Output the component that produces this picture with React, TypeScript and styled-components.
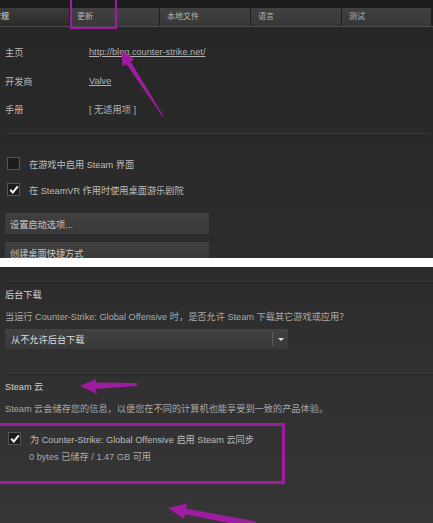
import React from "react";
import styled, { createGlobalStyle } from "styled-components";

const GlobalStyle = createGlobalStyle`
  html, body { margin: 0; padding: 0; background: #ffffff; }
  body {
    font-family: "Liberation Sans", "Noto Sans CJK SC", Arial, sans-serif;
    -webkit-font-smoothing: antialiased;
  }
`;

const MAGENTA = "#9d1ca0";

const Root = styled.div`
  position: relative;
  width: 433px;
  height: 523px;
  overflow: hidden;
  background: #ffffff;
  font-size: 9.2px;
`;

const TopPanel = styled.section`
  height: 258px;
  overflow: hidden;
  display: flex;
  flex-direction: column;
  background: linear-gradient(#262626, #2d2d2d);
`;

const TitleStrip = styled.div`
  height: 8px;
  flex: none;
  background: #1c1c1c;
`;

const TabBar = styled.nav`
  flex: none;
  height: 18px;
  display: flex;
  gap: 1px;
  background: #1f1f1f;
  border-bottom: 1px solid #4a4a4a;
`;

const Tab = styled.div<{ $w: number; $active?: boolean }>`
  width: ${(p) => p.$w}px;
  flex: none;
  overflow: hidden;
  white-space: nowrap;
  line-height: 18px;
  font-size: 8px;
  padding-left: ${(p) => (p.$active ? 0 : 7)}px;
  text-indent: ${(p) => (p.$active ? -7 : 0)}px;
  color: ${(p) => (p.$active ? "#e2e2e2" : "#b4b4b4")};
  background: ${(p) =>
    p.$active
      ? "linear-gradient(#3d3d3d, #2a2a2a)"
      : "linear-gradient(#414141, #383838)"};
`;

const TopBody = styled.div`
  padding: 0 5px;
  display: flex;
  flex-direction: column;
`;

const InfoGrid = styled.dl`
  margin: 18px 0 0;
  display: grid;
  grid-template-columns: 84px 1fr;
  grid-auto-rows: 14px;
  row-gap: 14.5px;
  align-items: center;
`;

const InfoLabel = styled.dt`
  margin: 0;
  color: #b9b9b9;
`;

const InfoValue = styled.dd<{ $link?: boolean }>`
  margin: 0;
  color: #b3b3b3;
  text-decoration: ${(p) => (p.$link ? "underline" : "none")};
  text-underline-offset: 1px;
`;

const Divider = styled.hr<{ $top: number; $inset?: boolean }>`
  margin: ${(p) => p.$top}px 0 0;
  border: 0;
  height: 1px;
  background: #3b3b3b;
  box-shadow: 0 1px 0 #222;
`;

const CheckRow = styled.label<{ $top: number; $indent: number }>`
  margin-top: ${(p) => p.$top}px;
  padding-left: ${(p) => p.$indent}px;
  display: flex;
  align-items: center;
  gap: 9px;
  height: 13px;
  color: #bdbdbd;
  white-space: nowrap;
`;

const Box = styled.span`
  width: 11px;
  height: 11px;
  flex: none;
  border: 1px solid #555;
  background: #1d1d1d;
  display: flex;
  align-items: center;
  justify-content: center;
`;

const ActionButton = styled.div<{ $top: number }>`
  margin-top: ${(p) => p.$top}px;
  width: 204px;
  height: 21px;
  flex: none;
  box-sizing: border-box;
  padding-left: 5px;
  display: flex;
  align-items: center;
  background: linear-gradient(#3f3f3f, #3a3a3a);
  color: #c6c6c6;
`;

const Gap = styled.div`
  height: 9px;
  background: #ffffff;
`;

const BottomPanel = styled.section`
  position: relative;
  height: 256px;
  padding: 14px 0 0 5px;
  box-sizing: border-box;
  display: flex;
  flex-direction: column;
  background: linear-gradient(#2c2c2c, #363636);
`;

const Heading = styled.div<{ $top: number }>`
  margin-top: ${(p) => p.$top}px;
  line-height: 12px;
  color: #d2d2d2;
`;

const Desc = styled.div<{ $top: number; $indent?: number }>`
  margin-top: ${(p) => p.$top}px;
  padding-left: ${(p) => p.$indent || 0}px;
  line-height: 12px;
  color: #a9a9a9;
  white-space: nowrap;
`;

const Select = styled.div`
  margin-top: 6px;
  width: 283px;
  height: 20px;
  display: flex;
  align-items: center;
  background: linear-gradient(#424242, #393939);
  color: #dcdcdc;
`;

const SelectText = styled.span`
  flex: 1;
  padding-left: 6px;
`;

const SelectArrow = styled.span`
  width: 15px;
  height: 14px;
  border-left: 1px solid #5c5c5c;
  display: flex;
  align-items: center;
  justify-content: center;
`;

const Tri = styled.span`
  width: 0;
  height: 0;
  border-left: 3px solid transparent;
  border-right: 3px solid transparent;
  border-top: 3px solid #dcdcdc;
`;

const HighlightBox = styled.div`
  position: absolute;
  left: -3px;
  top: 156px;
  width: 288px;
  height: 61px;
  box-sizing: border-box;
  border: 3px solid ${MAGENTA};
  pointer-events: none;
`;

const Annotations = styled.svg`
  position: absolute;
  left: 0;
  top: 0;
  pointer-events: none;
`;

const Check = () => (
  <svg width="10" height="9" viewBox="0 0 10 9">
    <path d="M1.2 4.8 L3.8 7.4 L8.8 1.4" fill="none" stroke="#f2f2f2" strokeWidth="2" />
  </svg>
);

export default function App() {
  return (
    <Root>
      <GlobalStyle />
      <TopPanel>
        <TitleStrip />
        <TabBar>
          <Tab $w={69} $active>常规</Tab>
          <Tab $w={82}>更新</Tab>
          <Tab $w={83}>本地文件</Tab>
          <Tab $w={83}>语言</Tab>
          <Tab $w={82}>测试</Tab>
        </TabBar>
        <TopBody>
          <InfoGrid>
            <InfoLabel>主页</InfoLabel>
            <InfoValue $link>http://blog.counter-strike.net/</InfoValue>
            <InfoLabel>开发商</InfoLabel>
            <InfoValue $link>Valve</InfoValue>
            <InfoLabel>手册</InfoLabel>
            <InfoValue>[ 无适用项 ]</InfoValue>
          </InfoGrid>
          <Divider $top={17} />
          <CheckRow $top={23} $indent={2}>
            <Box />
            在游戏中启用 Steam 界面
          </CheckRow>
          <CheckRow $top={13} $indent={2}>
            <Box><Check /></Box>
            在 SteamVR 作用时使用桌面游乐剧院
          </CheckRow>
          <ActionButton $top={17}>设置启动选项...</ActionButton>
          <ActionButton $top={8}>创建桌面快捷方式</ActionButton>
        </TopBody>
      </TopPanel>
      <Gap />
      <BottomPanel>
        <Divider $top={0} />
        <Heading $top={7}>后台下载</Heading>
        <Desc $top={10}>当运行 Counter-Strike: Global Offensive 时，是否允许 Steam 下载其它游戏或应用？</Desc>
        <Select>
          <SelectText>从不允许后台下载</SelectText>
          <SelectArrow><Tri /></SelectArrow>
        </Select>
        <Divider $top={24} />
        <Heading $top={7}>Steam 云</Heading>
        <Desc $top={10}>Steam 云会储存您的信息，以便您在不同的计算机也能享受到一致的产品体验。</Desc>
        <CheckRow $top={17} $indent={3}>
          <Box><Check /></Box>
          为 Counter-Strike: Global Offensive 启用 Steam 云同步
        </CheckRow>
        <Desc $top={6} $indent={24}>0 bytes 已储存 / 1.47 GB 可用</Desc>
        <HighlightBox />
      </BottomPanel>
      <Annotations width="433" height="523" viewBox="0 0 433 523">
        <rect x="71" y="-2" width="45" height="30" fill="none" stroke={MAGENTA} strokeWidth="2.2" />
        <polygon
          points="121,51 134.5,59 130.7,61.5 163.5,116 162.5,116.5 126.5,64.2 122.7,66.6"
          fill={MAGENTA}
        />
        <polygon
          points="80,386 96,379 95.5,382.5 137,383 137,386 95.5,389 97,394"
          fill={MAGENTA}
        />
        <polygon
          points="168,508 187,503.6 186.2,508.5 256,521.5 254.5,528 185,514.3 184.1,519.2"
          fill={MAGENTA}
        />
      </Annotations>
    </Root>
  );
}
